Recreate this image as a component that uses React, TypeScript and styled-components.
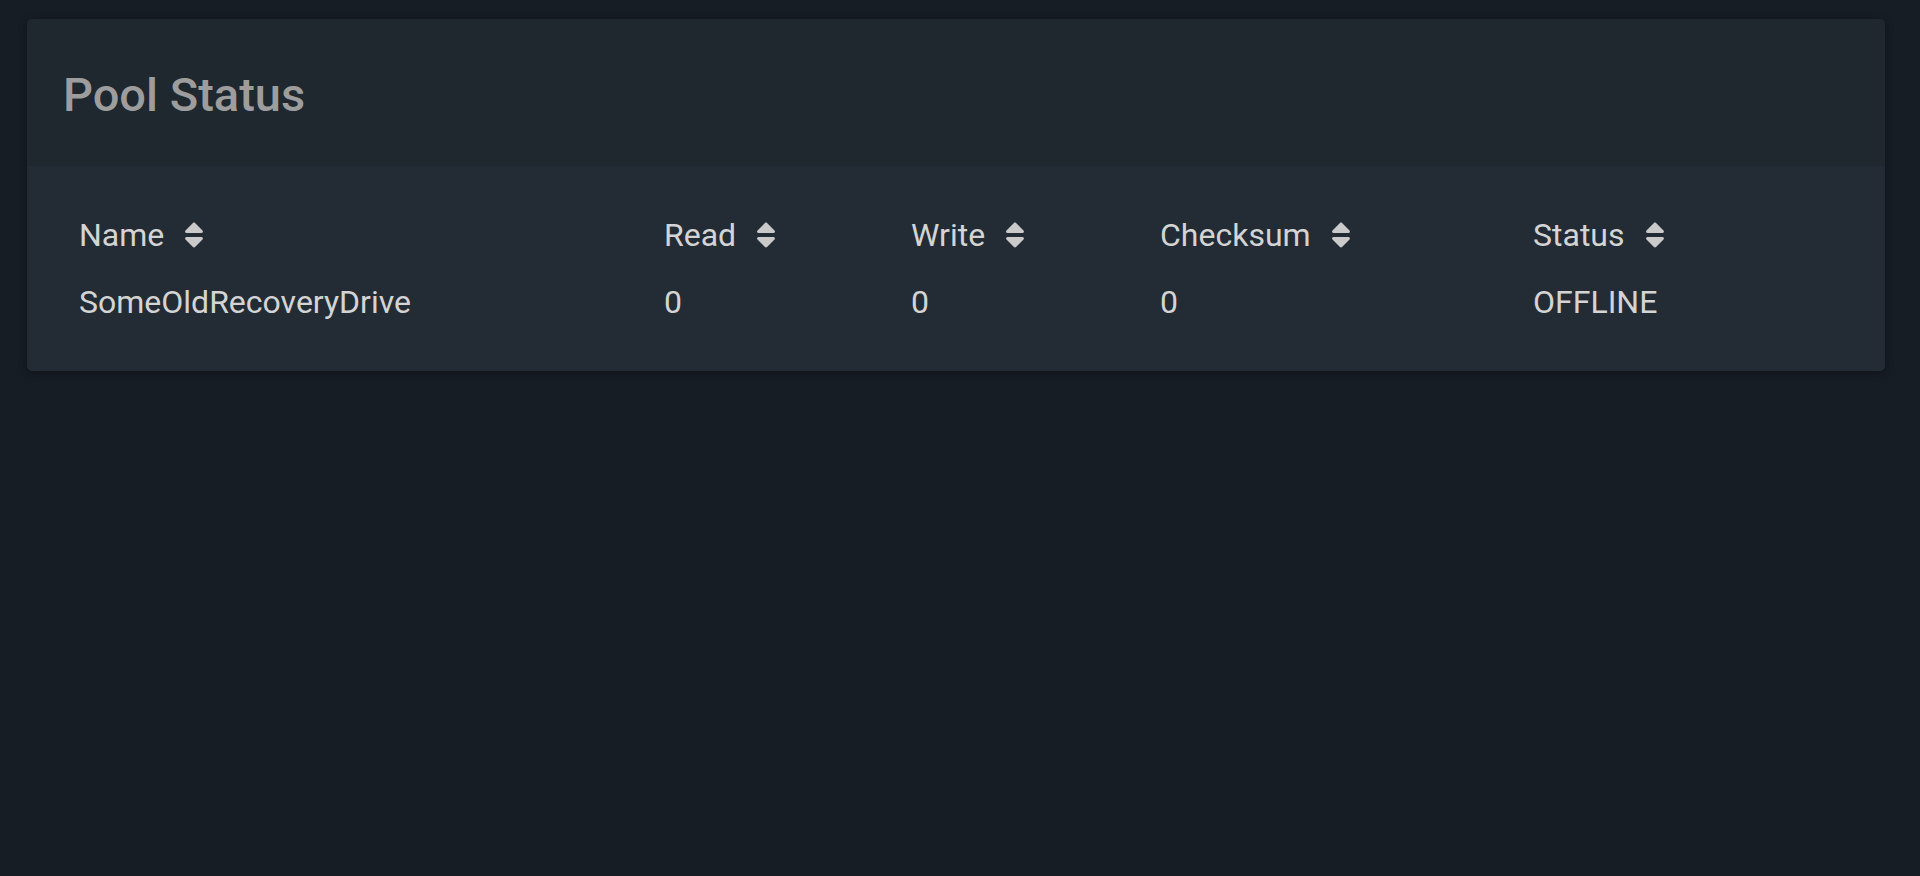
import React from "react";
import styled, { createGlobalStyle } from "styled-components";

const GlobalStyle = createGlobalStyle`
  html, body {
    margin: 0;
    padding: 0;
    background: #171d25;
    font-family: Roboto, "Liberation Sans", Arial, sans-serif;
  }
  * { box-sizing: border-box; }
`;

const Page = styled.div`
  min-height: 876px;
  background: #171d25;
  padding: 19px 35px 0 27px;
`;

const Card = styled.section`
  background: #232c35;
  border-radius: 5px;
  box-shadow: 0 2px 8px rgba(0, 0, 0, 0.35);
  overflow: hidden;
`;

const CardHeader = styled.header`
  background: #1f272f;
  padding: 48px 36px 44px;
`;

const Title = styled.h1`
  margin: 0;
  font-size: 47px;
  line-height: 55px;
  font-weight: 500;
  color: #9d9d9d;
`;

const CardBody = styled.div`
  padding: 35px 40px 36px;
`;

const Table = styled.div`
  display: grid;
  grid-template-columns: 585px 247px 249px 373px 1fr;
`;

const Cell = styled.div<{ $head?: boolean }>`
  display: flex;
  align-items: center;
  padding: 10px 12px 9px;
  font-size: 32px;
  line-height: 48px;
  font-weight: 400;
  color: #d4d4d4;
  white-space: nowrap;
`;

const SortIcon = styled.svg`
  width: 20px;
  height: 32px;
  margin-left: 20px;
  fill: #cacaca;
  flex: none;
`;

const Sort = () => (
  <SortIcon viewBox="0 0 320 512" aria-hidden="true">
    <path d="M41 288h238c21.4 0 32.1 25.9 17 41L177 448c-9.4 9.4-24.6 9.4-33.9 0L24 329c-15.1-15.1-4.4-41 17-41zm255-105L177 64c-9.4-9.4-24.6-9.4-33.9 0L24 183c-15.1 15.1-4.4 41 17 41h238c21.4 0 32.1-25.9 17-41z" />
  </SortIcon>
);

const columns = ["Name", "Read", "Write", "Checksum", "Status"];
const rows = [["SomeOldRecoveryDrive", "0", "0", "0", "OFFLINE"]];

export default function App() {
  return (
    <>
      <GlobalStyle />
      <Page>
        <Card>
          <CardHeader>
            <Title>Pool Status</Title>
          </CardHeader>
          <CardBody>
            <Table>
              {columns.map((c) => (
                <Cell key={c} $head>
                  {c}
                  <Sort />
                </Cell>
              ))}
              {rows.map((r, i) =>
                r.map((v, j) => <Cell key={`${i}-${j}`}>{v}</Cell>)
              )}
            </Table>
          </CardBody>
        </Card>
      </Page>
    </>
  );
}
